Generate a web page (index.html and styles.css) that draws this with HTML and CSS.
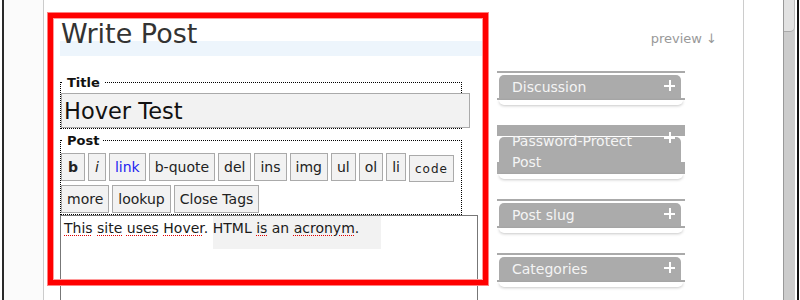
FILE: index.html
```html
<!DOCTYPE html>
<html lang="en">
<head>
    <meta charset="UTF-8">
    <title>Write Post</title>
    <link rel="stylesheet" href="styles.css">
</head>
<body>
    <div class="window">
        <div class="gutter"></div>

        <div class="page">
            <div class="main">
                <h2 class="page-title">Write Post</h2>

                <fieldset class="field field-title">
                    <legend>Title</legend>
                    <input class="title-input" type="text" value="Hover Test">
                </fieldset>

                <fieldset class="field field-post">
                    <legend>Post</legend>
                    <div class="toolbar">
                        <button class="ed-btn ed-bold">b</button>
                        <button class="ed-btn ed-italic">i</button>
                        <button class="ed-btn ed-link">link</button>
                        <button class="ed-btn">b-quote</button>
                        <button class="ed-btn">del</button>
                        <button class="ed-btn">ins</button>
                        <button class="ed-btn">img</button>
                        <button class="ed-btn">ul</button>
                        <button class="ed-btn">ol</button>
                        <button class="ed-btn">li</button>
                        <button class="ed-btn ed-code">code</button>
                        <button class="ed-btn">more</button>
                        <button class="ed-btn">lookup</button>
                        <button class="ed-btn">Close Tags</button>
                    </div>
                </fieldset>

                <div class="editor">
                    <span class="sp">This</span> <span class="sp">site</span> <span class="sp">uses</span> <span class="sp">Hover</span>. <span class="hovered">HTML <span class="sp">is</span> an <span class="sp">acronym</span>.</span>
                </div>
            </div>

            <div class="side">
                <div class="preview">preview ↓</div>

                <div class="box">
                    <div class="box-mid">
                        <h3 class="box-head"><span class="head-text"><span class="plus"></span>Discussion</span></h3>
                    </div>
                    <div class="box-foot"></div>
                </div>

                <div class="box box-tall">
                    <div class="box-mid">
                        <h3 class="box-head"><span class="head-text"><span class="plus"></span>Password-Protect Post</span></h3>
                    </div>
                    <div class="box-foot"></div>
                </div>

                <div class="box">
                    <div class="box-mid">
                        <h3 class="box-head"><span class="head-text"><span class="plus"></span>Post slug</span></h3>
                    </div>
                    <div class="box-foot"></div>
                </div>

                <div class="box">
                    <div class="box-mid">
                        <h3 class="box-head"><span class="head-text"><span class="plus"></span>Categories</span></h3>
                    </div>
                    <div class="box-foot"></div>
                </div>
            </div>

            <!-- highlight drawn over the form -->
            <div class="highlight"></div>
        </div>

        <div class="right-gap"></div>
        <div class="scrollbar"><div class="thumb"></div></div>
        <div class="edge-right"></div>
    </div>
</body>
</html>
```

FILE: styles.css
```css
html, body {
    margin: 0;
    padding: 0;
    background: #fff;
    overflow: hidden;
}

body {
    font-family: 'DejaVu Sans', Verdana, sans-serif;
    color: #222;
}

.window {
    display: flex;
    height: 300px;
    overflow: hidden;
}

.gutter {
    margin-left: 2px;
    width: 39px;
    border-left: 2px solid #2a2a2a;
    border-right: 1px solid #ccc;
    background: #fbfbfb;
}

.page {
    position: relative;
    display: flex;
    align-items: flex-start;
    width: 683px;
    padding-left: 16px;
    border-right: 1px solid #ccc;
}

.right-gap {
    width: 39px;
}

.scrollbar {
    width: 11px;
    border-left: 1px solid #999;
    background: #ccc;
}

    .scrollbar .thumb {
        height: 32px;
        background: #e2e2e2;
        border-right: 1px solid #bbb;
        border-bottom: 1px solid #aaa;
        border-bottom-right-radius: 5px;
        box-sizing: border-box;
    }

.edge-right {
    width: 2px;
    margin-left: 2px;
    background: #111;
}

/* main column */

.main {
    width: 423px;
    padding-top: 18px;
}

.page-title {
    margin: 0;
    padding: 0 0 6px 1px;
    font-size: 27px;
    line-height: 32px;
    font-weight: normal;
    color: #333;
    background: linear-gradient(to bottom, transparent 23px, #edf5fc 23px);
}

.field {
    width: 400px;
    margin: 0;
    padding: 0;
    min-width: 0;
    border: 1px dotted #000;
}

    .field legend {
        margin-left: 2px;
        padding: 0 4px;
        font-size: 13px;
        line-height: 15px;
        font-weight: bold;
        color: #111;
    }

.field-title {
    margin-top: 19px;
}

.title-input {
    display: block;
    width: 409px;
    height: 35px;
    margin: 3px 0 0 0;
    padding: 0 2px;
    box-sizing: border-box;
    border: 1px solid #aaa;
    background: #f2f2f2;
    font-family: 'DejaVu Sans', Verdana, sans-serif;
    font-size: 22.5px;
    color: #111;
    outline: none;
}

.field-post {
    margin-top: 4px;
    padding-bottom: 1px;
}

.toolbar {
    display: flex;
    flex-wrap: wrap;
    align-items: flex-start;
    gap: 3px;
    padding-top: 5px;
}

.ed-btn {
    height: 28px;
    margin: 0;
    padding: 0 5px;
    box-sizing: border-box;
    border: 1px solid #aaa;
    border-radius: 0;
    background: #f2f2f2;
    font-family: 'DejaVu Sans', Verdana, sans-serif;
    font-size: 14px;
    line-height: 26px;
    color: #222;
}

.ed-bold {
    font-weight: bold;
    padding: 0 6px;
}

.ed-italic {
    font-style: italic;
    padding: 0 6px;
}

.ed-link {
    color: #1c1cf0;
}

.ed-code {
    height: 27px;
    margin-top: 2px;
    font-size: 12px;
    letter-spacing: 1px;
}

.editor {
    position: relative;
    z-index: 0;
    width: 410px;
    height: 110px;
    padding: 4px 3px;
    border: 1px solid #777;
    background: #fff;
    font-size: 14px;
    line-height: 17px;
    color: #1a1a1a;
}

.sp {
    text-decoration: underline dotted #e00000;
    text-decoration-thickness: 1px;
    text-underline-offset: 2px;
}

.hovered {
    position: relative;
}

    .hovered::before {
        content: '';
        position: absolute;
        left: 0;
        top: -4px;
        right: -22px;
        height: 33px;
        background: #f2f2f2;
        z-index: -1;
    }

/* sidebar */

.side {
    width: 220px;
    margin-left: 14px;
    padding-top: 31px;
}

.preview {
    text-align: right;
    font-size: 13px;
    line-height: 16px;
    color: #999;
    margin-bottom: 24px;
}

.box {
    width: 188px;
    border-top: 2px solid #aaa;
    margin-bottom: 20px;
}

.box-mid {
    padding: 2px 0 1px 0;
    background: linear-gradient(to top, #aaa 2px, transparent 2px);
}

.box-head {
    display: flow-root;
    height: 24px;
    margin: 0 4px 0 2px;
    padding: 0 6px 0 13px;
    box-sizing: border-box;
    background: #ababab;
    border-radius: 5px 5px 0 0;
    font-size: 14px;
    line-height: 21px;
    font-weight: normal;
    color: #f4f4f4;
}

.head-text {
    display: block;
    margin-top: 2px;
}

.plus {
    float: right;
    width: 11px;
    height: 11px;
    margin: 3px 0 0 6px;
    background:
        linear-gradient(#fff, #fff) center / 100% 2px no-repeat,
        linear-gradient(#fff, #fff) center / 2px 100% no-repeat;
}

.box-foot {
    height: 5px;
    margin: 0 2px;
    background: #fff;
    border-radius: 0 0 6px 6px;
    box-shadow: 0 1px 3px rgba(0,0,0,0.22);
}

.box-tall {
    border-top-width: 11px;
}

    .box-tall .box-mid {
        padding-top: 1px;
        background: linear-gradient(to top, #aaa 12px, transparent 12px);
    }

    .box-tall .box-head {
        height: 36px;
    }

    .box-tall .head-text {
        margin-top: -6px;
    }

    .box-tall .plus {
        margin-top: 1px;
    }

/* red highlight frame */

.highlight {
    position: absolute;
    left: 4px;
    top: 13px;
    width: 440px;
    height: 272px;
    box-sizing: border-box;
    border: 5px solid #f00;
    box-shadow: 0 0 0 1px #ff8080, inset 0 0 0 1px #ff9a9a;
    pointer-events: none;
}
```
